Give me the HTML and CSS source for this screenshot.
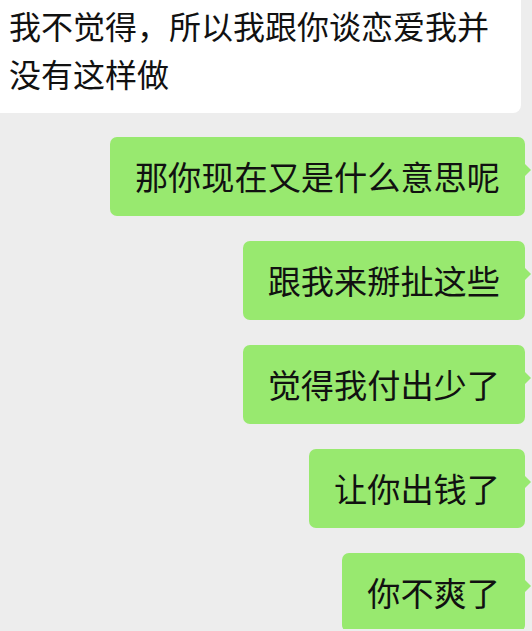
FILE: index.html
```html
<!DOCTYPE html>
<html lang="zh-CN">
<head>
<meta charset="utf-8">
<title>聊天</title>
<link rel="stylesheet" href="styles.css">
</head>
<body>
<div class="chat">
  <div class="msg msg-in">我不觉得，所以我跟你谈恋爱我并没有这样做</div>
  <div class="msg msg-out">那你现在又是什么意思呢</div>
  <div class="msg msg-out">跟我来掰扯这些</div>
  <div class="msg msg-out">觉得我付出少了</div>
  <div class="msg msg-out">让你出钱了</div>
  <div class="msg msg-out">你不爽了</div>
</div>
</body>
</html>
```
FILE: styles.css
```css
html, body {
  margin: 0;
  padding: 0;
  background: #ededed;
}
body {
  width: 532px;
  height: 631px;
  overflow: hidden;
  font-family: "Noto Sans CJK SC", "Noto Sans", sans-serif;
  color: #111;
}
.chat {
  display: flex;
  flex-direction: column;
  gap: 25px;
  height: 629px;
  overflow: hidden;
}
.msg {
  box-sizing: border-box;
}
.msg-in {
  background: #ffffff;
  width: 521px;
  padding: 1px 22px 16px 9px;
  font-size: 32px;
  line-height: 48px;
  border-bottom-right-radius: 8px;
  margin-bottom: -1px;
}
.msg-out {
  position: relative;
  align-self: flex-end;
  margin-right: 7px;
  background: #98e96f;
  border-radius: 7px;
  padding: 15px 25px 16px 25px;
  font-size: 33.2px;
  line-height: 48px;
  white-space: nowrap;
}
.msg-out::after {
  content: "";
  position: absolute;
  right: -6px;
  top: 26px;
  border-left: 7px solid #98e96f;
  border-top: 7px solid transparent;
  border-bottom: 7px solid transparent;
}
```
